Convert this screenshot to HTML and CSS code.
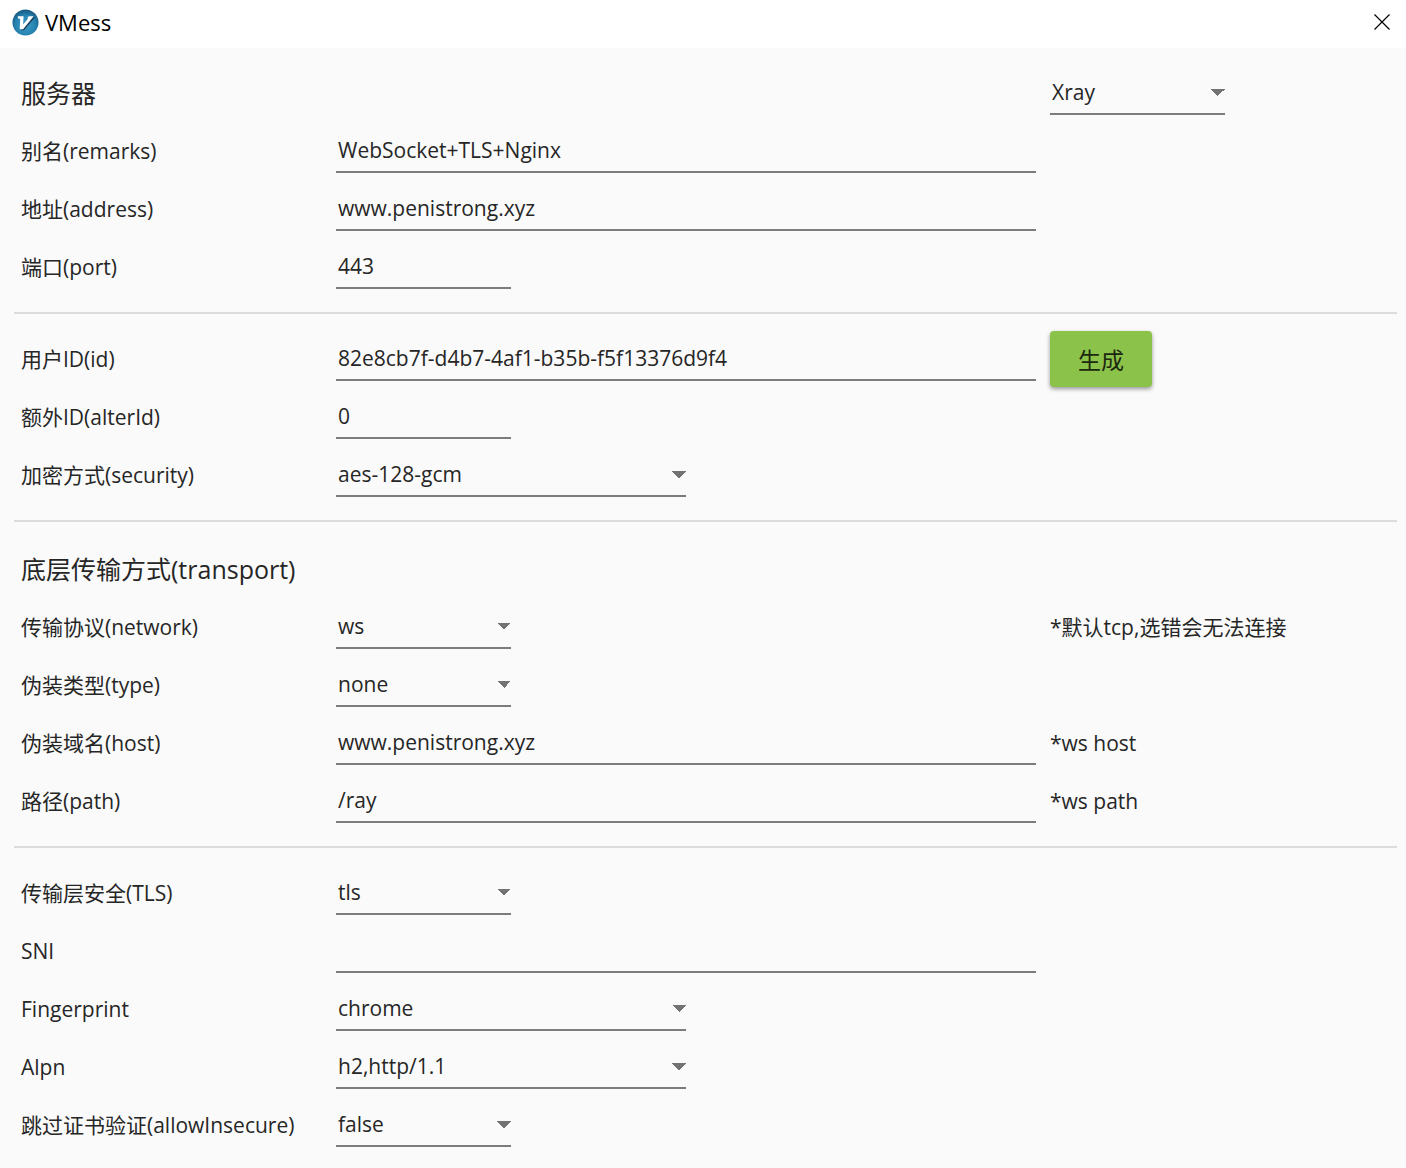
FILE: index.html
```html
<!DOCTYPE html>
<html lang="zh-CN">
<head>
<meta charset="utf-8">
<meta name="viewport" content="width=device-width, initial-scale=1">
<title>VMess</title>
<link rel="stylesheet" href="styles.css">
</head>
<body>
<header class="titlebar">
  <svg class="logo" viewBox="0 0 28 28" aria-hidden="true">
    <defs>
      <radialGradient id="disc" cx="50%" cy="60%" r="55%">
        <stop offset="0" stop-color="#3f9fc8"/>
        <stop offset="0.7" stop-color="#2583b0"/>
        <stop offset="1" stop-color="#1b5f88"/>
      </radialGradient>
    </defs>
    <circle cx="14" cy="14" r="13.5" fill="url(#disc)"/>
    <path d="M9 22 12.500 22 23.500 9 22 7.500Z" fill="#17415c"/>
    <path d="M6 7.500H12L11.500 16 17 9.500H15.500L17.500 7.500H22.500L11.500 21H8L8.500 10H6.500Z" fill="#fff"/>
  </svg>
  <h1 class="titlebar-text">VMess</h1>
  <button class="close" type="button" aria-label="关闭">
    <svg class="close-icon" viewBox="0 0 16 16" aria-hidden="true"><path d="M.5.5 15.500 15.500M15.500.5.5 15.500" stroke="#000" stroke-width="1.200" fill="none"/></svg>
  </button>
</header>
<form class="form">
  <section class="section">
    <div class="row">
      <h2 class="heading">服务器</h2>
      <select class="field short aside" aria-label="Core"><option>Xray</option></select>
    </div>
    <div class="row">
      <label class="label" for="remarks">别名(remarks)</label>
      <input class="field" id="remarks" type="text" value="WebSocket+TLS+Nginx">
    </div>
    <div class="row">
      <label class="label" for="address">地址(address)</label>
      <input class="field" id="address" type="text" value="www.penistrong.xyz">
    </div>
    <div class="row">
      <label class="label" for="port">端口(port)</label>
      <input class="field short" id="port" type="text" value="443">
    </div>
  </section>
  <section class="section">
    <div class="row">
      <label class="label" for="id">用户ID(id)</label>
      <input class="field" id="id" type="text" value="82e8cb7f-d4b7-4af1-b35b-f5f13376d9f4">
      <button class="generate" type="button">生成</button>
    </div>
    <div class="row">
      <label class="label" for="alter">额外ID(alterId)</label>
      <input class="field short" id="alter" type="text" value="0">
    </div>
    <div class="row">
      <label class="label" for="security">加密方式(security)</label>
      <select class="field medium" id="security"><option>aes-128-gcm</option></select>
    </div>
  </section>
  <section class="section">
    <h2 class="heading heading-row">底层传输方式(transport)</h2>
    <div class="row">
      <label class="label" for="network">传输协议(network)</label>
      <select class="field short" id="network"><option>ws</option></select>
      <span class="hint">*默认tcp,选错会无法连接</span>
    </div>
    <div class="row">
      <label class="label" for="type">伪装类型(type)</label>
      <select class="field short" id="type"><option>none</option></select>
    </div>
    <div class="row">
      <label class="label" for="host">伪装域名(host)</label>
      <input class="field" id="host" type="text" value="www.penistrong.xyz">
      <span class="hint">*ws host</span>
    </div>
    <div class="row">
      <label class="label" for="path">路径(path)</label>
      <input class="field" id="path" type="text" value="/ray">
      <span class="hint">*ws path</span>
    </div>
  </section>
  <section class="section">
    <div class="row">
      <label class="label" for="tls">传输层安全(TLS)</label>
      <select class="field short" id="tls"><option>tls</option></select>
    </div>
    <div class="row">
      <label class="label" for="sni">SNI</label>
      <input class="field" id="sni" type="text">
    </div>
    <div class="row">
      <label class="label" for="fingerprint">Fingerprint</label>
      <select class="field medium" id="fingerprint"><option>chrome</option></select>
    </div>
    <div class="row">
      <label class="label" for="alpn">Alpn</label>
      <select class="field medium" id="alpn"><option>h2,http/1.1</option></select>
    </div>
    <div class="row">
      <label class="label" for="insecure">跳过证书验证(allowInsecure)</label>
      <select class="field short" id="insecure"><option>false</option></select>
    </div>
  </section>
</form>
</body>
</html>
```

FILE: styles.css
```css
* {
  box-sizing: border-box;
}

body {
  margin: 0;
  background: #fafafa;
  color: #262626;
  font-family: "Open Sans", "Noto Sans CJK SC", sans-serif;
  font-size: 21px;
  line-height: 30px;
}

.titlebar {
  display: flex;
  align-items: center;
  gap: 6px;
  height: 48px;
  padding: 0 16px 4px 12px;
  background: #fff;
  color: #000;
}

.logo {
  width: 27px;
  height: 27px;
}

.titlebar-text {
  flex: 1;
  margin: 0;
  font-size: 22px;
  font-weight: 400;
}

.close {
  display: flex;
  padding: 0;
  border: 0;
  background: none;
}

.close-icon {
  width: 16px;
  height: 16px;
}

.section {
  margin: 0 9px 0 14px;
  padding: 9px 0 23px 7px;
  border-bottom: 2px solid #dcdcdc;
}

.section:last-child {
  padding-bottom: 21px;
  border-bottom: 0;
}

.row {
  display: grid;
  grid-template-columns: 301px minmax(0, 700px) minmax(175px, 1fr);
  column-gap: 14px;
  align-items: end;
  height: 58px;
}

.label,
.hint {
  padding-bottom: 7px;
  white-space: nowrap;
}

.heading {
  margin: 0;
  padding-bottom: 2px;
  font-size: 25px;
  font-weight: 400;
  line-height: 40px;
}

.heading-row {
  padding-top: 18px;
}

.field {
  width: 100%;
  height: 40px;
  margin: 0;
  padding: 0 2px 4px;
  border: 0;
  border-bottom: 2px solid #7c7c7c;
  border-radius: 0;
  outline: 0;
  appearance: none;
  background: none;
  color: inherit;
  font: inherit;
}

select.field {
  background: conic-gradient(from -45deg at 50% 100%, #737373 90deg, transparent 0) right 14px / 14px 7px no-repeat;
}

.short {
  width: 175px;
}

.medium {
  width: 350px;
}

.aside {
  grid-column: 3;
}

.generate {
  justify-self: start;
  width: 102px;
  height: 56px;
  margin-bottom: -6px;
  padding: 2px 0 0;
  border: 0;
  border-radius: 4px;
  background: #8bc34a;
  box-shadow: 0 2px 4px rgba(0, 0, 0, 0.4);
  color: #1c270f;
  font: inherit;
  font-size: 23px;
}
```
